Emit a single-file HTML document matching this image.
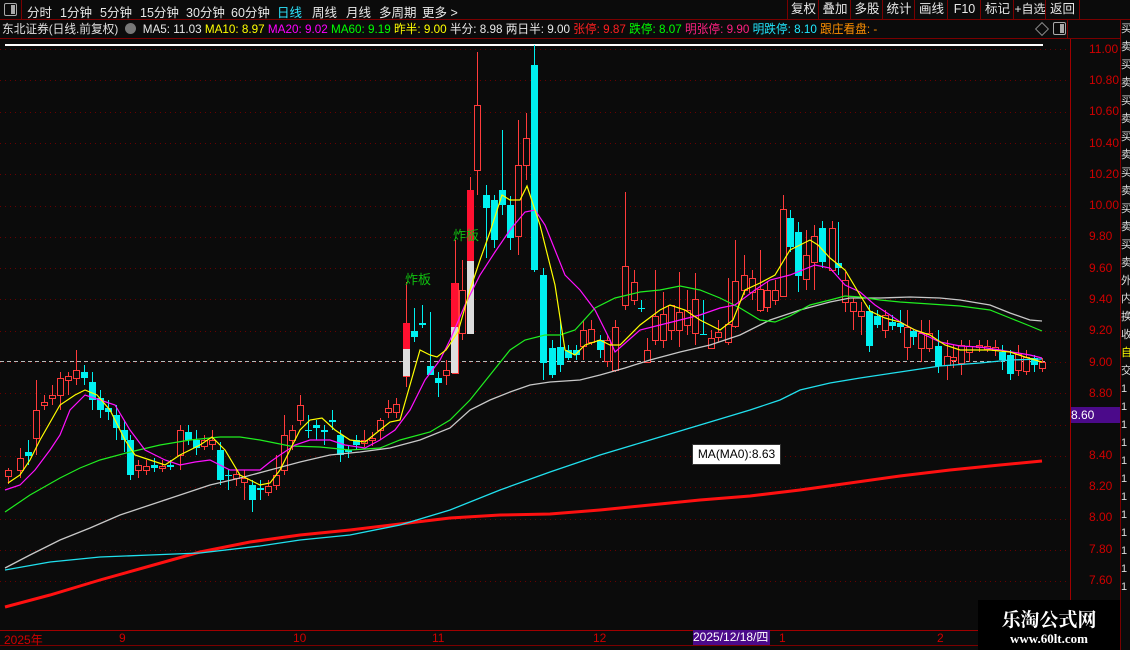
<!DOCTYPE html>
<html><head><meta charset="utf-8"><style>
body{margin:0;width:1130px;height:650px;background:#0b0b0b;overflow:hidden;font-family:"Liberation Sans","Noto Sans CJK SC",sans-serif;position:relative}
.top{position:absolute;left:0;top:0;width:1130px;height:19px;border-bottom:1px solid #7a0000;color:#e8e8e8;font-size:12.5px}
.top span{position:absolute;top:2px;white-space:nowrap}
.rb{position:absolute;top:0;height:19px;border-left:1px solid #7a0000;text-align:center;line-height:19px;font-size:12.5px;color:#e8e8e8;white-space:nowrap;overflow:hidden}
.row2{position:absolute;left:0;top:20px;height:19px;width:1030px;font-size:11.7px;line-height:19px;white-space:nowrap;overflow:hidden}
.ax{position:absolute;color:#d00000;font-size:12px;left:1089px}
.bx{position:absolute;color:#d00000;font-size:12px;top:631px}
</style></head><body>
<div class="top">
<div style="position:absolute;left:0;top:0;width:21px;height:19px;border-right:1px solid #7a0000"><div style="position:absolute;left:4px;top:3px;width:11px;height:11px;border:1px solid #aaa;border-radius:2px"><div style="position:absolute;right:1px;top:1px;width:4px;height:9px;background:#aaa"></div></div></div>
<span style="left:27px">分时</span><span style="left:60px">1分钟</span><span style="left:100px">5分钟</span><span style="left:140px">15分钟</span><span style="left:186px">30分钟</span><span style="left:231px">60分钟</span><span style="left:277px;color:#2ee6ff">日线</span><span style="left:312px">周线</span><span style="left:346px">月线</span><span style="left:379px">多周期</span><span style="left:422px">更多 &gt;</span>
</div>
<div class="rb" style="left:787px;width:31px">复权</div><div class="rb" style="left:818px;width:32px">叠加</div><div class="rb" style="left:850px;width:32px">多股</div><div class="rb" style="left:882px;width:32px">统计</div><div class="rb" style="left:914px;width:33px">画线</div><div class="rb" style="left:947px;width:33px">F10</div><div class="rb" style="left:980px;width:33px">标记</div><div class="rb" style="left:1013px;width:32px;font-size:12px">+自选</div><div class="rb" style="left:1045px;width:33px;border-right:1px solid #7a0000">返回</div>
<div class="row2">
<span style="color:#e0e0e0;margin-left:2px">东北证券(日线.前复权)</span>
<span style="display:inline-block;width:11px;height:11px;border-radius:6px;background:#777;vertical-align:-1px;margin:0 3px 0 4px"></span>
<span style="color:#e8e8e8">MA5: 11.03 </span><span style="color:#ffff00">MA10: 8.97 </span><span style="color:#ff00ff">MA20: 9.02 </span><span style="color:#00ff00">MA60: 9.19 </span><span style="color:#ffff00">昨半: 9.00 </span><span style="color:#e8e8e8">半分: 8.98 两日半: 9.00 </span><span style="color:#ff2020">张停: 9.87 </span><span style="color:#00ff00">跌停: 8.07 </span><span style="color:#ff2080">明张停: 9.90 </span><span style="color:#20e8ff">明跌停: 8.10 </span><span style="color:#ff9000">跟庄看盘: -</span>
</div>
<div style="position:absolute;left:1037px;top:24px;width:8px;height:8px;border:1px solid #888;transform:rotate(45deg)"></div>
<div style="position:absolute;left:1053px;top:22px;width:11px;height:11px;border:1px solid #aaa;border-radius:2px"><div style="position:absolute;right:1px;top:1px;width:4px;height:9px;background:#aaa"></div></div>
<div style="position:absolute;left:1067px;top:19px;width:1px;height:20px;background:#7a0000"></div>
<div style="position:absolute;left:0;top:38px;width:1120px;height:1px;background:#7a0000"></div>
<svg id="ch" width="1130" height="650" style="position:absolute;left:0;top:0" xmlns="http://www.w3.org/2000/svg"></svg>
<div style="position:absolute;left:1070px;top:39px;width:1px;height:591px;background:#a00000"></div>
<div class="ax" style="top:42px">11.00</div><div class="ax" style="top:73px">10.80</div><div class="ax" style="top:104px">10.60</div><div class="ax" style="top:136px">10.40</div><div class="ax" style="top:167px">10.20</div><div class="ax" style="top:198px">10.00</div><div class="ax" style="top:229px">9.80</div><div class="ax" style="top:261px">9.60</div><div class="ax" style="top:292px">9.40</div><div class="ax" style="top:323px">9.20</div><div class="ax" style="top:355px">9.00</div><div class="ax" style="top:386px">8.80</div><div class="ax" style="top:448px">8.40</div><div class="ax" style="top:479px">8.20</div><div class="ax" style="top:510px">8.00</div><div class="ax" style="top:542px">7.80</div><div class="ax" style="top:573px">7.60</div>
<div style="position:absolute;left:1071px;top:407px;width:49px;height:16px;background:#4b0a8a;color:#fff;font-size:12px;line-height:16px">8.60</div>
<div style="position:absolute;left:1120px;top:20px;width:10px;height:630px;background:#0b0b0b;border-left:1px solid #7a0000;color:#ddd;font-size:11px;line-height:18px;overflow:hidden">买<br>卖<br>买<br>卖<br>买<br>卖<br>买<br>卖<br>买<br>卖<br>买<br>卖<br>买<br>卖<br>外<br>内<br>换<br>收<br><span style="color:#ff0">自</span><br>交<br>1<br>1<br>1<br>1<br>1<br>1<br>1<br>1<br>1<br>1<br>1<br>1</div>
<div style="position:absolute;left:692px;top:444px;width:87px;height:19px;background:#fff;border:1px solid #333;color:#000;font-size:12px;line-height:19px;text-align:center">MA(MA0):8.63</div>
<div style="position:absolute;left:405px;top:269px;color:#10c010;font-size:13px">炸板</div>
<div style="position:absolute;left:453px;top:225px;color:#10c010;font-size:13px">炸板</div>
<div style="position:absolute;left:0;top:630px;width:1120px;height:1px;background:#a00000"></div>
<div style="position:absolute;left:0;top:645px;width:1120px;height:1px;background:#7a0000"></div>
<div class="bx" style="left:4px">2025年</div><div class="bx" style="left:119px">9</div><div class="bx" style="left:293px">10</div><div class="bx" style="left:432px">11</div><div class="bx" style="left:593px">12</div><div class="bx" style="left:779px">1</div><div class="bx" style="left:937px">2</div>
<div style="position:absolute;left:693px;top:630px;width:77px;height:15px;background:#4b0a8a;color:#fff;font-size:12px;line-height:15px">2025/12/18/四</div>
<div style="position:absolute;left:978px;top:600px;width:142px;height:50px;background:#000"></div>
<div style="position:absolute;left:978px;top:605px;width:142px;text-align:center;color:#fff;font-size:19px;font-weight:bold;font-family:'Noto Serif CJK SC','Noto Sans CJK SC',serif">乐淘公式网</div>
<div style="position:absolute;left:978px;top:631px;width:142px;text-align:center;color:#fff;font-size:13px;font-weight:bold;font-family:'Liberation Serif',serif">www.60lt.com</div>
<script>
var s=document.getElementById('ch'),h='';
for(var p=7.6;p<=11.01;p+=0.2){var y=Math.round(362-(p-9)*156.5)+0.5;h+='<line x1="0" x2="1068" y1="'+y+'" y2="'+y+'" stroke="#6a0000" stroke-dasharray="1,4"/>';}
h+='<line x1="0" x2="1045" y1="361.5" y2="361.5" stroke="#bbb" stroke-dasharray="4,3"/>';
h+='<line x1="5" x2="1043" y1="45" y2="45" stroke="#fff" stroke-width="2"/>';
function pl(pts,c,w){h+='<polyline fill="none" stroke="'+c+'" stroke-width="'+w+'" points="'+pts+'"/>';}
var C=[[8,476,470,468,484],[20,470,458,448,478],[28,452,456,440,465],[36,438,410,380,455],[44,405,402,395,410],[52,398,395,385,405],[60,395,378,372,410],[68,380,376,372,395],[76,378,370,350,385],[84,372,378,365,385],[92,382,400,372,410],[100,398,410,390,418],[108,408,412,400,420],[116,415,428,405,440],[124,430,440,420,452],[130,440,475,435,480],[138,470,465,460,478],[146,470,466,460,475],[154,465,468,458,472],[162,468,466,460,472],[170,465,467,460,470],[180,455,430,425,470],[188,432,440,425,445],[196,440,448,430,455],[204,446,440,435,450],[212,444,440,430,450],[220,450,480,442,485],[228,475,476,470,490],[236,478,474,470,486],[244,482,478,470,500],[252,485,500,480,512],[260,488,490,480,500],[268,492,486,480,496],[276,485,475,455,490],[284,470,435,415,475],[292,440,430,425,450],[300,420,405,395,425],[308,430,430,415,438],[316,425,428,420,440],[324,430,432,425,445],[332,420,422,410,430],[340,435,455,430,462],[348,450,452,445,458],[356,440,445,435,450],[364,443,440,430,447],[372,440,438,432,446],[380,430,420,418,440],[388,412,408,400,418],[396,412,404,398,418]];
var M=[[406,376,323,282,387],[414,331,337,308,342],[422,323,325,305,328],[430,366,375,312,365],[438,378,383,372,397],[446,375,370,360,385],[455,373,283,240,373],[462,333,290,260,340],[470,290,190,177,295],[477,170,105,52,195],[486,195,208,185,258],[494,200,240,195,248],[502,190,205,130,215],[510,205,238,196,250],[518,236,165,120,255],[526,165,138,113,180],[534,65,270,45,272],[543,275,363,268,380],[552,348,375,340,378],[560,347,365,320,372],[568,350,358,345,360],[576,350,355,345,360],[583,346,330,320,360],[591,342,329,320,345],[600,340,350,335,358],[607,361,340,335,367],[615,370,327,320,372],[625,305,266,192,310],[634,300,282,270,305],[641,308,308,300,312],[647,362,350,338,356],[655,340,316,270,345],[663,340,314,292,348],[671,330,305,305,340],[679,330,312,272,347],[687,325,310,290,335],[695,333,299,273,345],[703,334,334,300,335],[711,348,338,330,345],[718,337,332,320,342],[728,342,324,278,345],[735,326,281,240,328],[744,290,275,255,295],[752,292,278,270,300],[760,310,289,250,312],[767,307,290,281,312],[775,300,290,280,305],[783,296,209,195,297],[790,218,247,210,252],[798,232,276,222,292],[806,279,255,230,290],[814,262,236,225,290],[822,228,262,221,268],[832,270,228,221,272],[838,263,268,222,275],[845,302,280,272,312],[853,311,302,298,330],[861,316,311,302,335],[869,311,346,305,352],[877,316,325,310,328],[885,330,315,310,338],[892,322,326,315,330],[900,323,327,310,333],[907,347,327,310,360],[913,331,337,330,345],[921,348,333,320,362],[929,348,333,320,352],[938,346,366,330,373],[947,365,356,340,380],[953,360,357,345,368],[961,363,345,340,375],[969,352,346,340,362],[979,347,345,340,352],[987,349,346,340,352],[995,350,347,340,356],[1002,352,360,345,370],[1010,355,374,350,380],[1018,370,354,345,376],[1026,371,357,350,375],[1034,358,365,355,372],[1042,368,362,358,372]];
C=C.concat(M);
C.forEach(function(c){var x=c[0],o=c[1],cl=c[2],hi=Math.min(c[3],o,cl),lo=Math.max(c[4],o,cl);var up=cl<o;var t=Math.min(o,cl),b=Math.max(o,cl);if(b-t<1)b=t+1;
var col=up?'#ff3b3b':'#00f0f0';
h+='<line x1="'+(x+0.5)+'" x2="'+(x+0.5)+'" y1="'+hi+'" y2="'+lo+'" stroke="'+col+'"/>';
if(up)h+='<rect x="'+(x-2.5)+'" y="'+(t+0.5)+'" width="6" height="'+(b-t)+'" fill="#0b0b0b" stroke="'+col+'"/>';
else h+='<rect x="'+(x-3)+'" y="'+t+'" width="7" height="'+(b-t)+'" fill="'+col+'"/>';});
h+='<rect x="403" y="323" width="7" height="26" fill="#ff1030"/><rect x="403" y="349" width="7" height="27" fill="#ddd"/>';
h+='<rect x="451" y="283" width="7" height="44" fill="#ff1030"/><rect x="451" y="327" width="7" height="46" fill="#ddd"/>';
h+='<rect x="467" y="190" width="7" height="71" fill="#ff1030"/><rect x="467" y="261" width="7" height="73" fill="#ddd"/>';
pl("5,607 50,595 100,580 150,566 200,552 250,542 300,535 350,530 400,524 450,518 500,515 550,514 600,510 650,505 700,500 750,496 800,490 850,483 900,476 950,470 1000,465 1042,461","#ff1010",3);
pl("5,570 50,562 100,557 150,555 200,553 260,546 300,540 350,535 400,525 450,510 500,490 550,472 600,455 650,440 700,425 750,410 780,400 800,390 830,383 860,378 900,372 940,366 980,363 1010,360 1042,359","#20e0ee",1.3);
pl("5,568 30,555 60,540 90,528 120,515 150,505 180,495 210,485 240,478 270,470 300,462 330,455 360,452 390,448 420,440 450,428 470,410 490,400 510,392 530,385 550,382 580,380 600,375 625,368 650,360 680,352 710,345 740,335 770,320 800,310 830,302 850,298 880,298 910,297 940,298 960,300 990,305 1010,313 1030,320 1042,321","#c8c8c8",1.3);
pl("5,512 30,495 60,478 80,468 100,460 130,452 160,445 190,440 220,437 240,437 260,440 290,446 320,447 350,450 380,448 400,440 430,432 450,420 470,400 490,375 510,350 525,340 545,335 560,335 575,330 595,308 615,298 640,292 660,290 680,286 700,290 720,298 740,308 760,320 775,322 790,316 810,305 830,300 845,296 860,297 880,300 900,302 930,304 960,306 990,310 1010,318 1030,326 1042,331","#20ee20",1.2);
pl("5,490 20,485 35,470 50,450 60,435 70,410 85,395 100,400 115,405 130,430 145,450 165,460 180,465 195,462 210,460 230,470 245,470 260,470 270,462 280,455 295,445 310,440 330,440 345,445 365,448 380,440 395,430 410,410 425,380 440,360 450,340 465,305 480,275 495,252 510,230 525,212 535,210 545,225 555,250 565,275 580,290 595,310 610,340 615,352 623,345 640,330 660,325 680,320 700,315 720,308 735,305 755,290 770,280 790,275 815,265 830,268 845,285 860,292 875,305 890,315 905,325 925,335 940,342 960,346 980,347 1000,350 1030,355 1042,358","#ff10ff",1.2);
pl("8,483 20,475 30,460 40,440 60,405 75,395 85,390 97,395 110,410 125,440 135,455 150,460 165,465 180,455 200,445 212,437 225,450 240,475 260,485 270,483 280,470 290,450 300,430 310,420 322,418 335,430 350,440 365,442 380,430 390,422 400,420 420,350 430,355 437,357 446,350 458,332 470,290 480,260 490,232 502,195 510,200 520,200 527,186 540,225 555,285 565,350 575,355 585,345 600,340 610,345 620,345 640,325 660,310 670,305 685,310 700,320 720,330 733,320 745,290 760,283 775,275 790,250 800,245 810,240 818,245 830,258 845,270 860,295 870,311 885,318 900,322 915,330 930,335 945,345 960,350 975,350 990,350 1010,352 1025,357 1042,362","#ffff00",1.2);
s.innerHTML=h;
</script>
</body></html>
